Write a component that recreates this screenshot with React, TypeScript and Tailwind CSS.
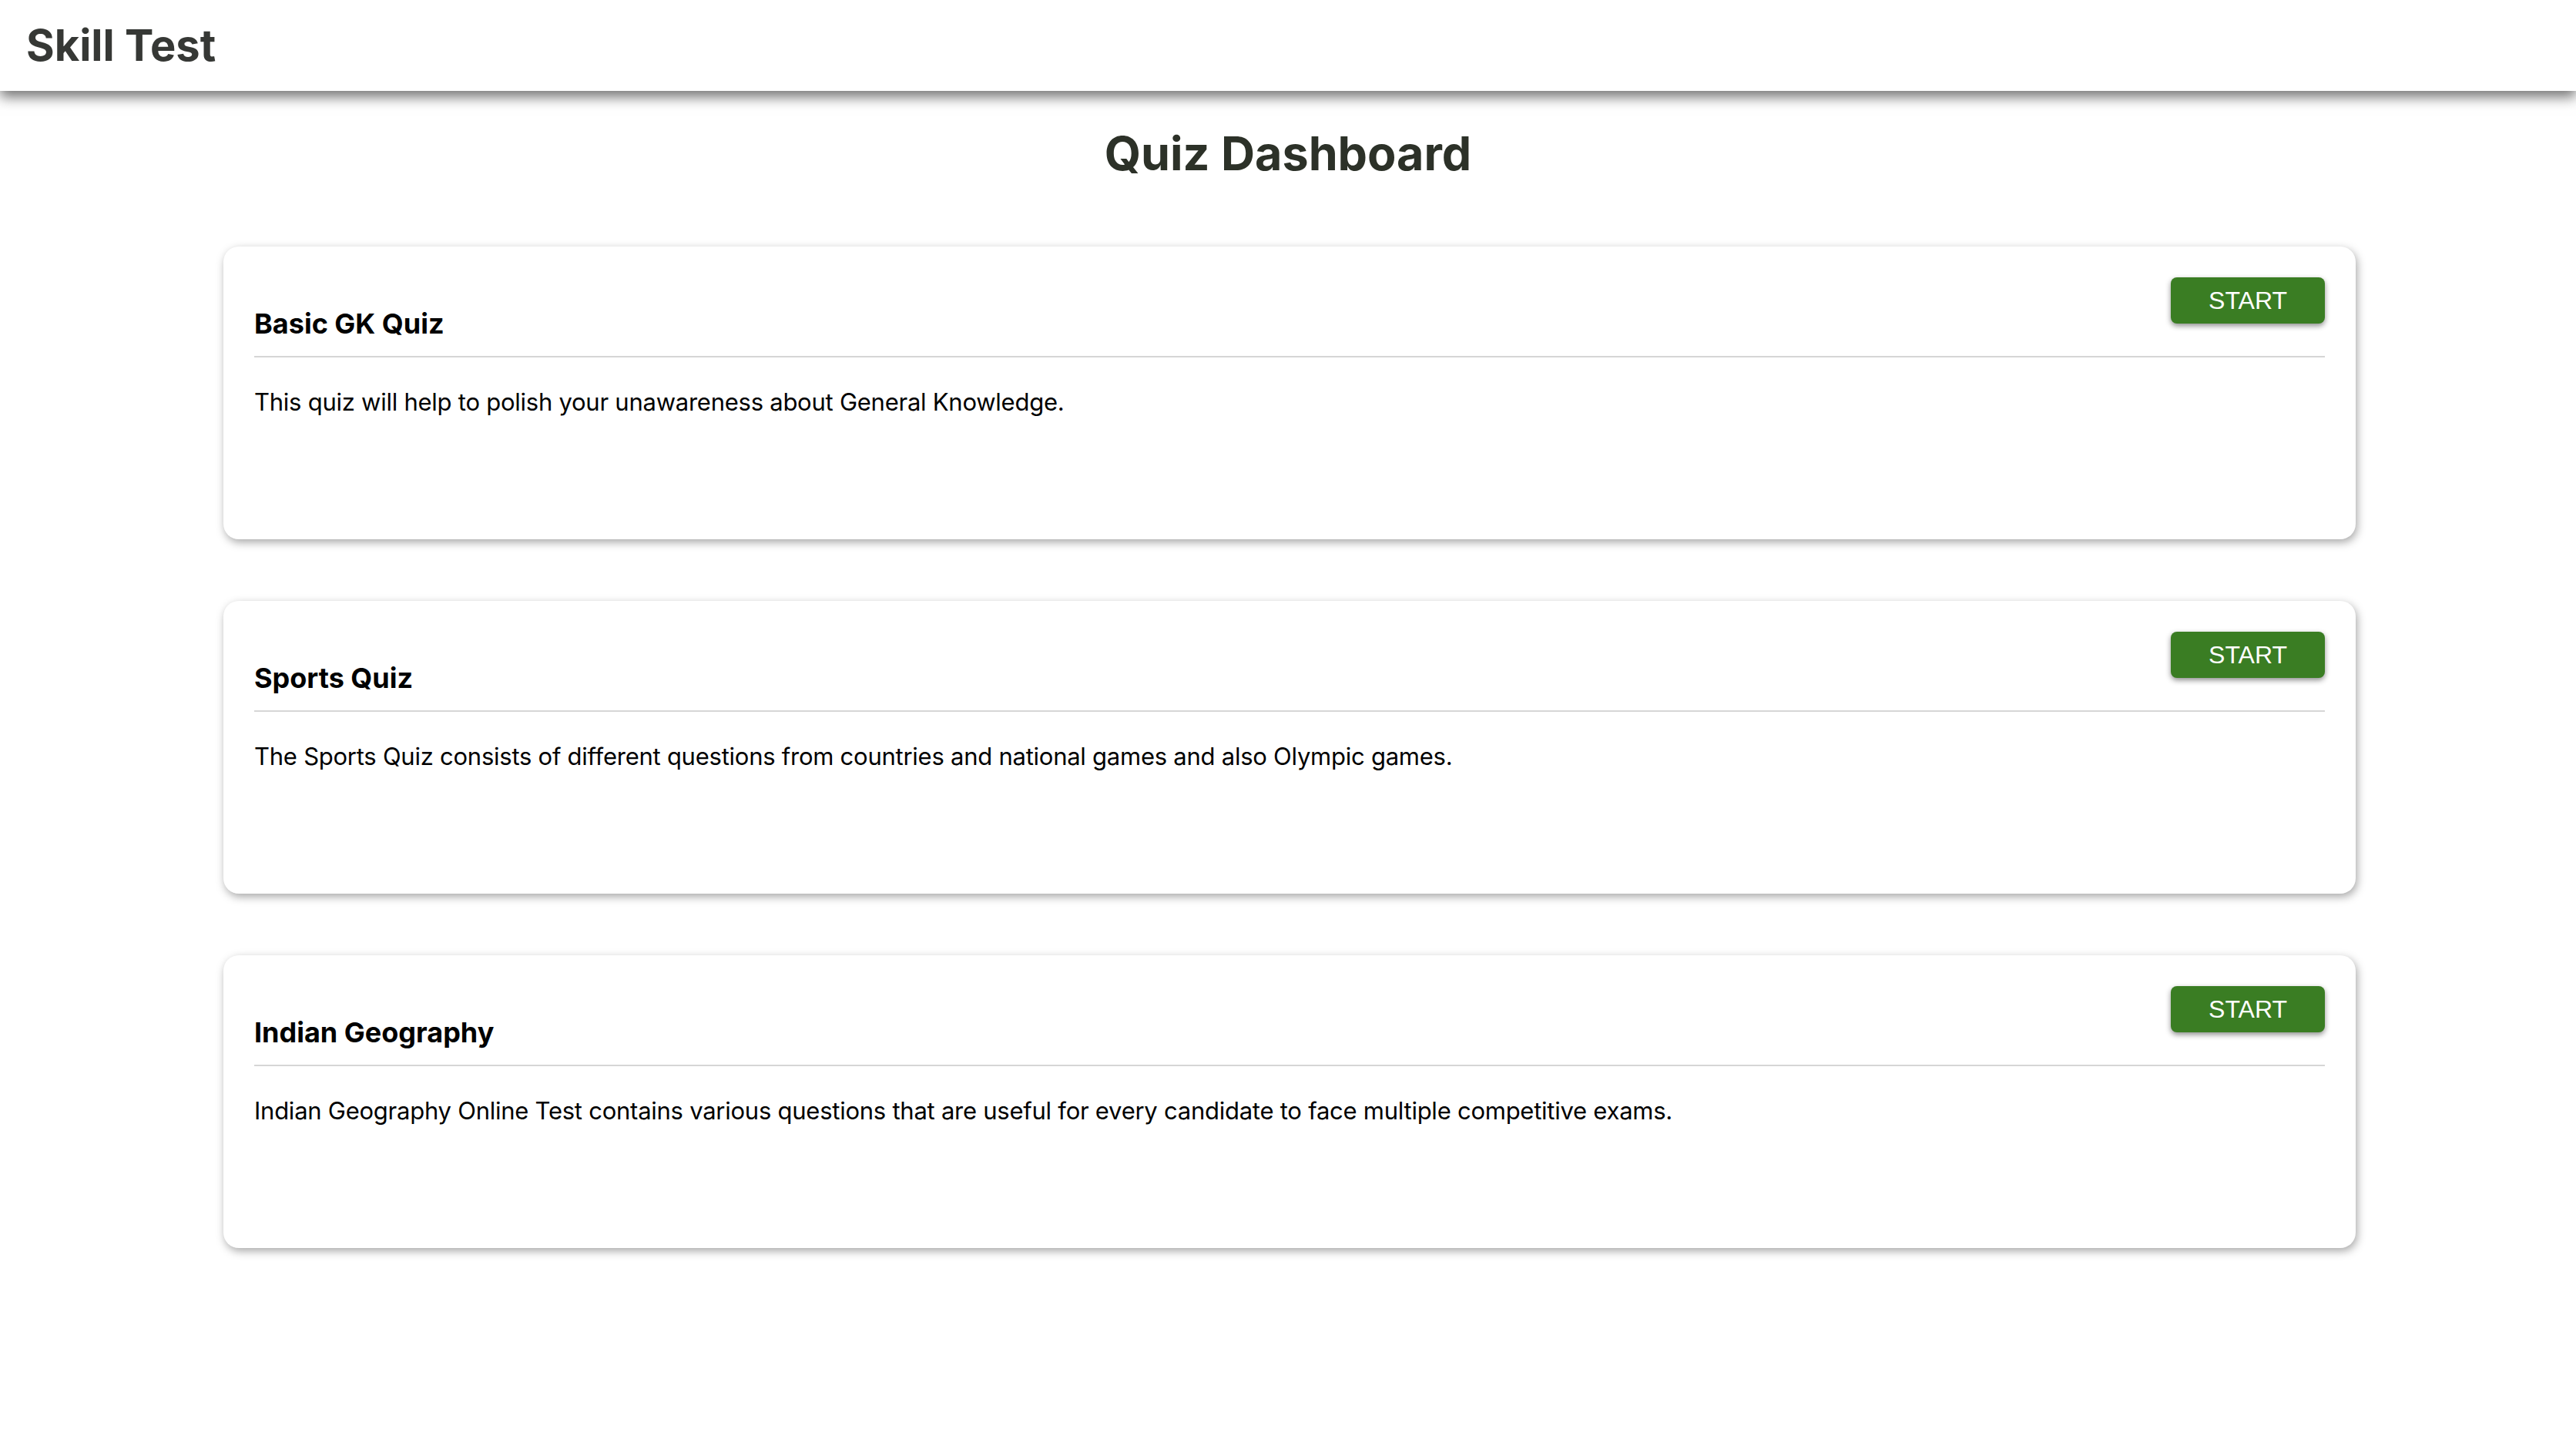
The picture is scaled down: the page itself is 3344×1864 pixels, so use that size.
import React from "react";

const quizzes = [
  {
    title: "Basic GK Quiz",
    desc: "This quiz will help to polish your unawareness about General Knowledge.",
  },
  {
    title: "Sports Quiz",
    desc: "The Sports Quiz consists of different questions from countries and national games and also Olympic games.",
  },
  {
    title: "Indian Geography",
    desc: "Indian Geography Online Test contains various questions that are useful for every candidate to face multiple competitive exams.",
  },
];

function QuizCard({ title, desc }: { title: string; desc: string }) {
  return (
    <div className="h-[380px] rounded-[20px] bg-white p-[40px] shadow-[2px_4px_12px_rgba(0,0,0,0.35)]">
      <div className="flex justify-between pb-[20px]">
        <h3 className="pt-[38px] text-[36px] leading-[44px] font-bold text-black">{title}</h3>
        <button
          className="h-[60px] w-[200px] rounded-[8px] bg-[#3a7d23] text-[32px] text-white shadow-[0_3px_7px_rgba(0,0,0,0.45)]"
          style={{ fontFamily: '"Liberation Sans", Arial, sans-serif' }}
        >
          START
        </button>
      </div>
      <div className="h-[2px] bg-[#d6d6d6]" />
      <p className="mt-[38px] text-[31px] leading-[39px] tracking-[-0.25px] text-black">{desc}</p>
    </div>
  );
}

export default function App() {
  return (
    <div
      className="min-h-screen bg-white"
      style={{ fontFamily: 'Inter, "Noto Sans", sans-serif' }}
    >
      <header className="relative z-10 flex h-[118px] items-center bg-white px-[34px] shadow-[0_8px_16px_rgba(0,0,0,0.55)]">
        <h2 className="text-[56px] font-bold text-[#363835]">Skill Test</h2>
      </header>
      <main className="pt-[44px]">
        <h1 className="text-center text-[61px] leading-[74px] font-bold text-[#2c3128]">
          Quiz Dashboard
        </h1>
        <div className="ml-[290px] mt-[84px] flex w-[2768px] flex-col gap-[80px]">
          {quizzes.map((q) => (
            <QuizCard key={q.title} title={q.title} desc={q.desc} />
          ))}
        </div>
      </main>
    </div>
  );
}
